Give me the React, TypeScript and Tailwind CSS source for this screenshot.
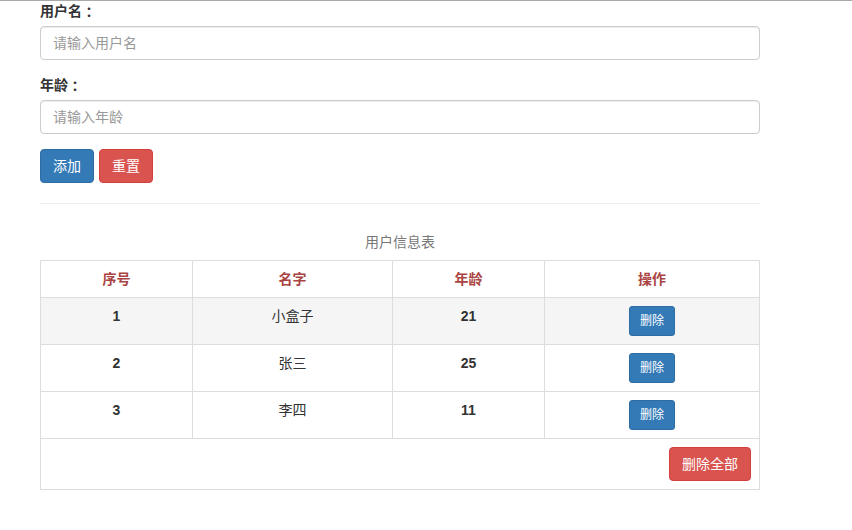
import React from "react";

const rows = [
  { id: 1, name: "小盒子", age: 21 },
  { id: 2, name: "张三", age: 25 },
  { id: 3, name: "李四", age: 11 },
];

const Colon = () => (
  <span
    className="inline-block h-[20px] align-top leading-[20px]"
    style={{ fontFamily: '"Noto Sans CJK TC", sans-serif' }}
  >
    ：
  </span>
);

export default function App() {
  return (
    <div
      className="min-h-[530px] bg-white text-[14px] leading-[20px] text-[#333]"
      style={{ fontFamily: '"Liberation Sans", "Noto Sans CJK SC", sans-serif' }}
    >
      <div className="h-px bg-[#a9a9a9]" />
      <div className="w-[720px] ml-[40px]">
        <div className="mb-[15px]">
          <label className="block h-[20px] mb-[5px] font-bold">
            用户名<Colon />
          </label>
          <input
            className="block w-full h-[34px] px-[12px] py-[6px] border border-[#ccc] rounded-[4px] shadow-[inset_0_1px_1px_rgba(0,0,0,0.075)] placeholder:text-[#999] outline-none"
            placeholder="请输入用户名"
          />
        </div>
        <div className="mb-[15px]">
          <label className="block h-[20px] mb-[5px] font-bold">
            年龄<Colon />
          </label>
          <input
            className="block w-full h-[34px] px-[12px] py-[6px] border border-[#ccc] rounded-[4px] shadow-[inset_0_1px_1px_rgba(0,0,0,0.075)] placeholder:text-[#999] outline-none"
            placeholder="请输入年龄"
          />
        </div>
        <div className="flex gap-[5px]">
          <button className="h-[34px] px-[12px] border border-[#2e6da4] bg-[#337ab7] text-white rounded-[4px]">
            添加
          </button>
          <button className="h-[34px] px-[12px] border border-[#d43f3a] bg-[#d9534f] text-white rounded-[4px]">
            重置
          </button>
        </div>
        <div className="mt-[20px] mb-[20px] border-t border-[#eee]" />
        <div className="text-center text-[#777] py-[8px]">用户信息表</div>
        <table className="w-[719px] table-fixed border-collapse border border-[#ddd]">
          <colgroup>
            <col className="w-[152px]" />
            <col className="w-[200px]" />
            <col className="w-[152px]" />
            <col className="w-[215px]" />
          </colgroup>
          <thead>
            <tr className="text-[#a94442] font-bold">
              <th className="border border-[#ddd] p-[8px] text-center">序号</th>
              <th className="border border-[#ddd] p-[8px] text-center">名字</th>
              <th className="border border-[#ddd] p-[8px] text-center">年龄</th>
              <th className="border border-[#ddd] p-[8px] text-center">操作</th>
            </tr>
          </thead>
          <tbody>
            {rows.map((r, i) => (
              <tr key={r.id} className={i === 0 ? "bg-[#f5f5f5]" : ""}>
                <td className="border border-[#ddd] p-[8px] text-center align-top font-bold">{r.id}</td>
                <td className="border border-[#ddd] p-[8px] text-center align-top">{r.name}</td>
                <td className="border border-[#ddd] p-[8px] text-center align-top font-bold">{r.age}</td>
                <td className="border border-[#ddd] p-[8px] text-center align-top">
                  <button className="h-[30px] px-[10px] text-[12px] leading-[18px] border border-[#2e6da4] bg-[#337ab7] text-white rounded-[3px] align-top">
                    删除
                  </button>
                </td>
              </tr>
            ))}
            <tr>
              <td colSpan={4} className="border border-[#ddd] p-[8px] text-right">
                <button className="h-[34px] px-[12px] border border-[#d43f3a] bg-[#d9534f] text-white rounded-[4px] align-top">
                  删除全部
                </button>
              </td>
            </tr>
          </tbody>
        </table>
      </div>
    </div>
  );
}
